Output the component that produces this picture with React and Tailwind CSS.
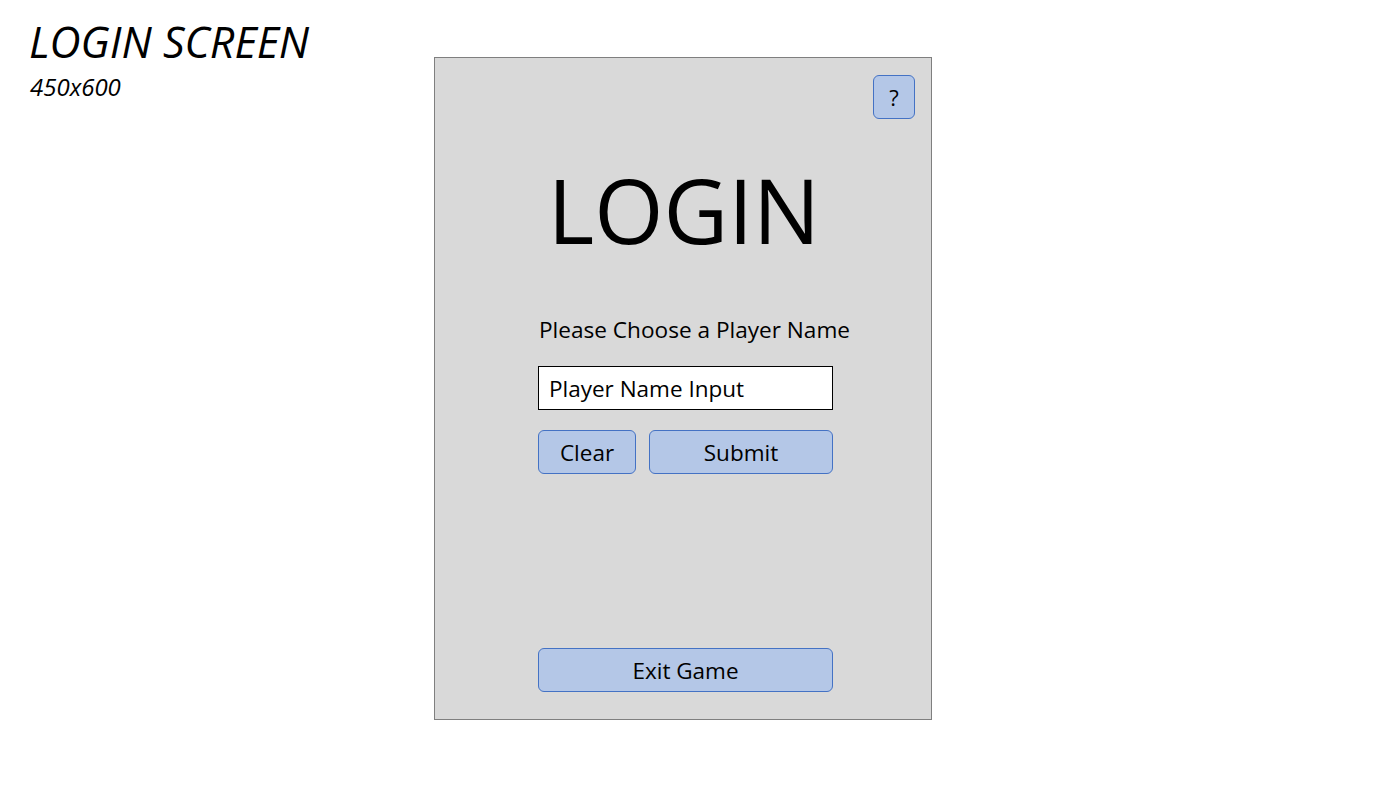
import React from "react";

const font = { fontFamily: '"Open Sans", "Noto Sans", sans-serif' };

export default function App() {
  return (
    <div className="flex w-[1399px] h-[787px] bg-white text-black" style={font}>
      <div className="w-[434px] shrink-0 pl-[29px] pt-[21px]">
        <div className="text-[43px] leading-[42px] italic whitespace-nowrap">LOGIN SCREEN</div>
        <div className="mt-[12px] ml-[1px] text-[24px] leading-[24px] italic">450x600</div>
      </div>
      <div className="mt-[57px] w-[498px] h-[663px] border border-[#7f7f7f] bg-[#d9d9d9] flex flex-col">
        <div className="flex justify-end pt-[17px] pr-[16px]">
          <button className="w-[42px] h-[44px] rounded-[6px] border border-[#4472c4] bg-[#b4c7e7] text-[22px] leading-none flex items-center justify-center">
            ?
          </button>
        </div>
        <div className="mt-[46px] text-center text-[89px] leading-[89px] pl-[2px]">LOGIN</div>
        <div className="ml-[103px] w-[295px] flex flex-col">
          <div className="mt-[65px] pl-[1px] text-[22.6px] leading-[22px] whitespace-nowrap">
            Please Choose a Player Name
          </div>
          <div className="mt-[25px] h-[44px] border border-black bg-white flex items-center pl-[10px] pt-[2px] text-[22.5px]">
            Player Name Input
          </div>
          <div className="mt-[20px] flex gap-[13px]">
            <button className="w-[98px] h-[44px] rounded-[6px] border border-[#4472c4] bg-[#b4c7e7] text-[22.5px] flex items-center justify-center pt-[2px]">
              Clear
            </button>
            <button className="flex-1 h-[44px] rounded-[6px] border border-[#4472c4] bg-[#b4c7e7] text-[22.5px] flex items-center justify-center pt-[2px]">
              Submit
            </button>
          </div>
        </div>
        <div className="mt-auto mb-[27px] ml-[103px] w-[295px]">
          <button className="w-full h-[44px] rounded-[6px] border border-[#4472c4] bg-[#b4c7e7] text-[22.5px] flex items-center justify-center pt-[2px]">
            Exit Game
          </button>
        </div>
      </div>
    </div>
  );
}
